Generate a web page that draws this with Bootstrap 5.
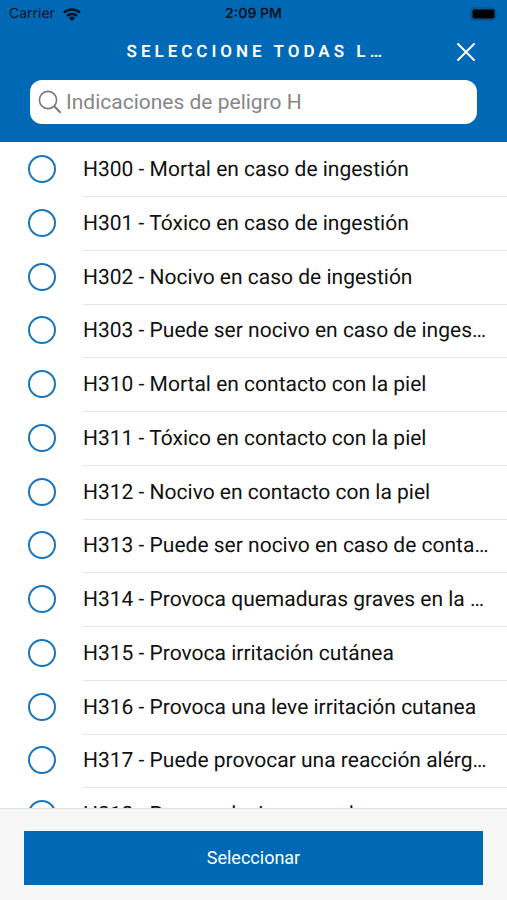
<!DOCTYPE html>
<html lang="es">
<head>
<meta charset="utf-8">
<meta name="viewport" content="width=device-width, initial-scale=1">
<title>Indicaciones de peligro H</title>
<link href="https://cdn.jsdelivr.net/npm/bootstrap@5.3.0/dist/css/bootstrap.min.css" rel="stylesheet">
<style>
  :root { --brand: #0069b6; }
  body { font-family: Roboto, "Liberation Sans", sans-serif; text-rendering: geometricPrecision; color: #111; background: #fff; }
  .app-head { background: var(--brand); padding-bottom: 18px; }
  .status { display: grid; grid-template-columns: 1fr auto 1fr; height: 28px; padding: 0 9px; color: #08131f; font: 14px/28px Inter, sans-serif; }
  .clock { font-weight: 600; }
  .title-bar { display: grid; grid-template-columns: 1fr 262px 1fr; height: 48px; padding: 0 30px 0 38px; }
  .title-bar h1 { grid-column: 2; font-size: 17px; line-height: 24px; font-weight: 600; letter-spacing: 4px; color: #fff; }
  .close-btn { line-height: 0; color: #fff; }
  .search { height: 44px; margin: 4px 30px 0; padding: 0 8px; border-radius: 12px; color: #777; }
  .search .form-control { font-size: 21px; line-height: 28px; color: #333; }
  .search .form-control::placeholder { color: #868686; }
  .options { overflow-y: auto; scrollbar-width: none; padding-top: 1px; }
  .options::-webkit-scrollbar { display: none; }
  .option { height: 54px; padding-left: 28px; }
  .option:nth-child(4n+3) { height: 53px; }
  .option .form-check-input { width: 28px; height: 28px; margin: 0 0 2px; border: 2px solid #1a76bc; background-color: #fff; }
  .option .form-check-input:checked { background-color: var(--brand); }
  .option label { margin-left: 27px; padding: 2px 18px 0 0; border-bottom: 1px solid #e6e6e6; font-size: 21px; line-height: 51px; }
  .app-foot { background: #f7f7f7; border-top: 1px solid #e2e2e2; padding: 22px 24px 15px; }
  .app-foot .btn { height: 54px; background: var(--brand); color: #fff; font-size: 18px; line-height: 28px; }
</style>
<script src="https://cdn.jsdelivr.net/npm/bootstrap@5.3.0/dist/js/bootstrap.bundle.min.js"></script>
</head>
<body class="vh-100 d-flex flex-column overflow-hidden">
<header class="app-head flex-shrink-0">
  <div class="status">
    <div class="d-flex align-items-center gap-2">
      <span>Carrier</span>
      <svg width="18" height="13" viewBox="0 0 18 13" aria-hidden="true"><g fill="none" stroke="#08131f" stroke-width="2.5"><path d="M1 4.7a11.5 11.5 0 0 1 16 0"/><path d="M4 7.9a7.2 7.2 0 0 1 10 0"/></g><path d="M6 10a4.4 4.4 0 0 1 6 0l-3 3z" fill="#08131f"/></svg>
    </div>
    <span class="clock">2:09 PM</span>
    <div class="d-flex align-items-center justify-content-end">
      <svg width="29" height="14" viewBox="0 0 29 14" aria-hidden="true"><rect x="1.7" y=".7" width="25" height="12.6" rx="3.8" fill="#035a9b" stroke="#075391"/><rect x="3.5" y="2.5" width="22" height="9" rx="2" fill="#000"/><path d="M28 4.5q1.8 2.5 0 5z" fill="#075391"/></svg>
    </div>
  </div>
  <div class="title-bar align-items-center">
    <h1 class="text-truncate m-0">SELECCIONE TODAS LAS INDICACIONES</h1>
    <button type="button" class="close-btn btn p-0 border-0 ms-auto" aria-label="Cerrar">
      <svg width="22" height="22" viewBox="0 0 22 22" fill="none" stroke="#fff" stroke-width="2" stroke-linecap="round" aria-hidden="true"><path d="M3 3l16 16M19 3L3 19"/></svg>
    </button>
  </div>
  <div class="search bg-white d-flex align-items-center">
    <svg width="24" height="24" viewBox="0 0 24 24" fill="none" stroke="#777" stroke-width="1.6" class="flex-shrink-0" aria-hidden="true"><circle cx="10" cy="10" r="8.6"/><path d="M16 16l6.6 6.8" stroke-width="2"/></svg>
    <input type="search" class="form-control border-0 shadow-none bg-transparent p-0 ms-1" placeholder="Indicaciones de peligro H" aria-label="Indicaciones de peligro H">
  </div>
</header>
<main class="options flex-grow-1">
  <div class="option d-flex align-items-center"><input class="form-check-input rounded-circle flex-shrink-0" type="checkbox" id="h300"><label class="text-truncate flex-grow-1" for="h300">H300 - Mortal en caso de ingestión</label></div>
  <div class="option d-flex align-items-center"><input class="form-check-input rounded-circle flex-shrink-0" type="checkbox" id="h301"><label class="text-truncate flex-grow-1" for="h301">H301 - Tóxico en caso de ingestión</label></div>
  <div class="option d-flex align-items-center"><input class="form-check-input rounded-circle flex-shrink-0" type="checkbox" id="h302"><label class="text-truncate flex-grow-1" for="h302">H302 - Nocivo en caso de ingestión</label></div>
  <div class="option d-flex align-items-center"><input class="form-check-input rounded-circle flex-shrink-0" type="checkbox" id="h303"><label class="text-truncate flex-grow-1" for="h303">H303 - Puede ser nocivo en caso de ingestión</label></div>
  <div class="option d-flex align-items-center"><input class="form-check-input rounded-circle flex-shrink-0" type="checkbox" id="h310"><label class="text-truncate flex-grow-1" for="h310">H310 - Mortal en contacto con la piel</label></div>
  <div class="option d-flex align-items-center"><input class="form-check-input rounded-circle flex-shrink-0" type="checkbox" id="h311"><label class="text-truncate flex-grow-1" for="h311">H311 - Tóxico en contacto con la piel</label></div>
  <div class="option d-flex align-items-center"><input class="form-check-input rounded-circle flex-shrink-0" type="checkbox" id="h312"><label class="text-truncate flex-grow-1" for="h312">H312 - Nocivo en contacto con la piel</label></div>
  <div class="option d-flex align-items-center"><input class="form-check-input rounded-circle flex-shrink-0" type="checkbox" id="h313"><label class="text-truncate flex-grow-1" for="h313">H313 - Puede ser nocivo en caso de contacto con la piel</label></div>
  <div class="option d-flex align-items-center"><input class="form-check-input rounded-circle flex-shrink-0" type="checkbox" id="h314"><label class="text-truncate flex-grow-1" for="h314">H314 - Provoca quemaduras graves en la piel</label></div>
  <div class="option d-flex align-items-center"><input class="form-check-input rounded-circle flex-shrink-0" type="checkbox" id="h315"><label class="text-truncate flex-grow-1" for="h315">H315 - Provoca irritación cutánea</label></div>
  <div class="option d-flex align-items-center"><input class="form-check-input rounded-circle flex-shrink-0" type="checkbox" id="h316"><label class="text-truncate flex-grow-1" for="h316">H316 - Provoca una leve irritación cutanea</label></div>
  <div class="option d-flex align-items-center"><input class="form-check-input rounded-circle flex-shrink-0" type="checkbox" id="h317"><label class="text-truncate flex-grow-1" for="h317">H317 - Puede provocar una reacción alérgica en la piel</label></div>
  <div class="option d-flex align-items-center"><input class="form-check-input rounded-circle flex-shrink-0" type="checkbox" id="h318"><label class="text-truncate flex-grow-1" for="h318">H318 - Provoca lesiones oculares</label></div>
</main>
<footer class="app-foot flex-shrink-0">
  <button type="button" class="btn w-100 rounded-0 border-0">Seleccionar</button>
</footer>
</body>
</html>
